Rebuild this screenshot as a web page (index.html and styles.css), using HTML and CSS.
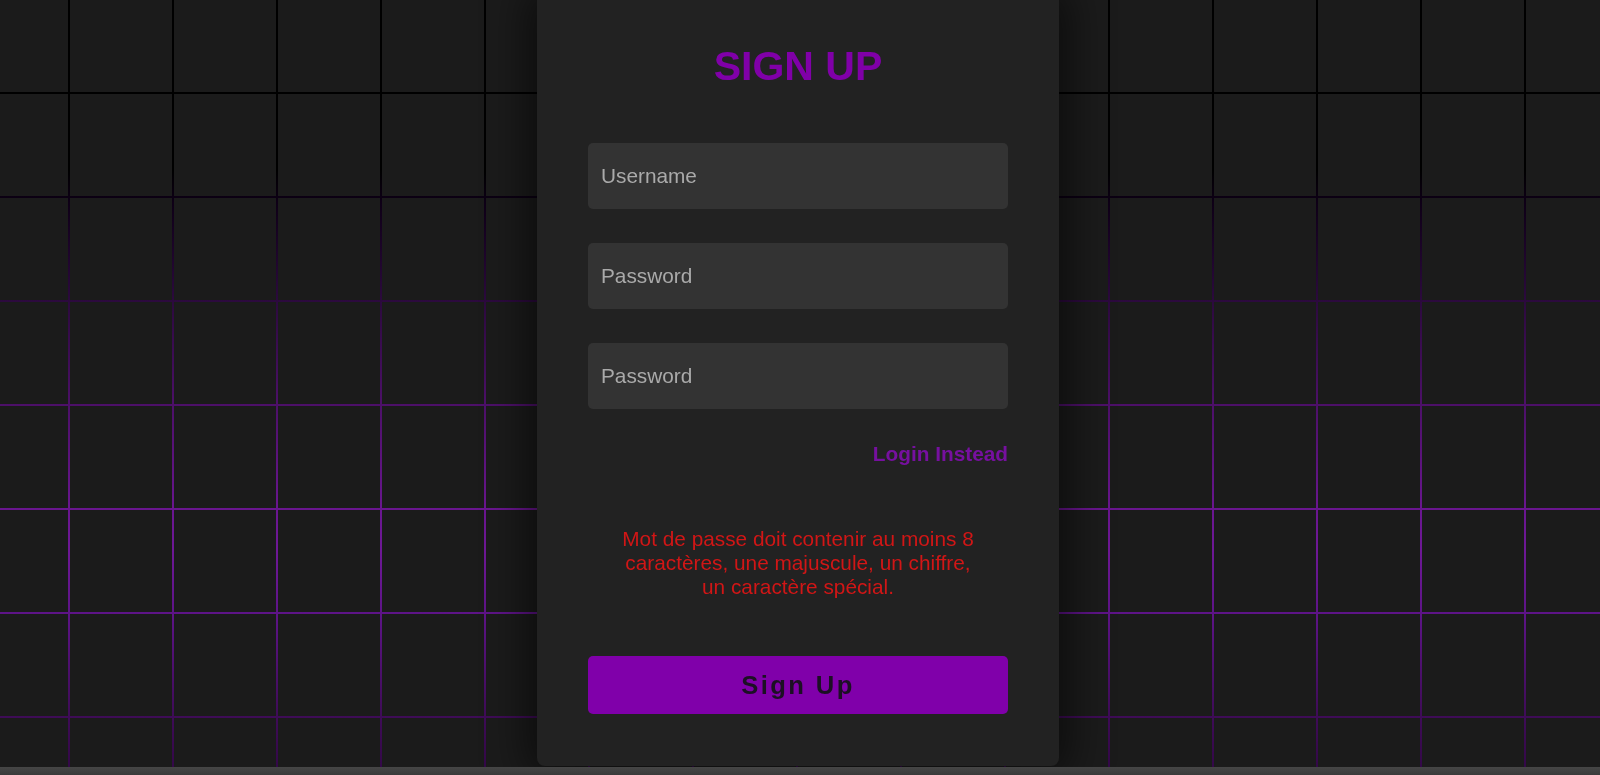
FILE: index.html
```html
<!DOCTYPE html>
<html lang="fr">
<head>
    <meta charset="UTF-8">
    <meta name="viewport" content="width=device-width, initial-scale=1.0">
    <title>Sign Up</title>
    <link rel="stylesheet" href="styles.css">
</head>
<body>
<div class="grille"></div>

<div class="page">
    <div class="carte">
        <h1 class="titre">SIGN UP</h1>

        <form class="champs">
            <input type="text" class="champ" placeholder="Username">
            <input type="password" class="champ" placeholder="Password">
            <input type="password" class="champ" placeholder="Password">
        </form>

        <a href="#" class="lien-login">Login Instead</a>

        <p class="erreur">Mot de passe doit contenir au moins 8 caractères, une majuscule, un chiffre, un caractère spécial.</p>

        <button type="button" class="bouton">Sign Up</button>
    </div>
</div>

<div class="barre-bas"></div>
</body>
</html>
```

FILE: styles.css
```css
body {
    margin: 0;
    height: 775px;
    overflow: hidden;
    background-color: #1b1b1b;
    font-family: "Liberation Sans", Arial, sans-serif;
}

/* Grille du fond : couleur des lignes selon la hauteur */
.grille {
    position: fixed;
    top: 0;
    left: 0;
    right: 0;
    bottom: 0;
    background: linear-gradient(to bottom,
        #000000 0,
        #000000 22%,
        #0e0016 26%,
        #2c0a3e 39%,
        #4c1068 52%,
        #6a1690 66%,
        #6e1896 71%,
        #5e1488 79%,
        #3f0c58 92%,
        #320846 100%);
    -webkit-mask-image: linear-gradient(to right, #000 2px, transparent 2px), linear-gradient(to bottom, #000 2px, transparent 2px);
    mask-image: linear-gradient(to right, #000 2px, transparent 2px), linear-gradient(to bottom, #000 2px, transparent 2px);
    -webkit-mask-size: 104px 104px;
    mask-size: 104px 104px;
    -webkit-mask-position: 68px 92px;
    mask-position: 68px 92px;
}

.page {
    position: relative;
    z-index: 1;
    height: 767px;
    display: flex;
    justify-content: center;
    padding-right: 4px;
}

.carte {
    width: 522px;
    height: 766px;
    box-sizing: border-box;
    padding: 43px 51px 52px;
    background-color: #222222;
    border-radius: 0 0 8px 8px;
    box-shadow: 0 0 40px 10px rgba(0, 0, 0, 0.55);
    display: flex;
    flex-direction: column;
}

.titre {
    margin: 0 0 54px;
    font-size: 41px;
    line-height: 46px;
    text-align: center;
    color: #8000a8;
}

.champs {
    display: flex;
    flex-direction: column;
    gap: 34px;
    margin: 0;
}

.champ {
    height: 66px;
    box-sizing: border-box;
    padding: 0 13px;
    border: none;
    border-radius: 5px;
    outline: none;
    background-color: #333333;
    color: #dddddd;
    font-family: inherit;
    font-size: 20.8px;
}

.champ::placeholder {
    color: #aaaaaa;
}

.lien-login {
    margin-top: 33px;
    align-self: flex-end;
    font-size: 20.8px;
    line-height: 23px;
    font-weight: bold;
    color: #76109f;
    text-decoration: none;
}

.erreur {
    margin: 62px 0 0;
    width: 364px;
    align-self: center;
    font-size: 20.8px;
    line-height: 24px;
    text-align: center;
    color: #d11616;
}

.bouton {
    margin-top: 57px;
    height: 58px;
    border: none;
    border-radius: 5px;
    background-color: #8000aa;
    color: #1c1024;
    font-family: inherit;
    font-size: 25.6px;
    font-weight: bold;
    letter-spacing: 2.4px;
}

/* Barre grise en bas de la fenêtre */
.barre-bas {
    position: relative;
    z-index: 1;
    height: 8px;
    background: linear-gradient(to bottom, #464646, #3a3a3a);
}
```
